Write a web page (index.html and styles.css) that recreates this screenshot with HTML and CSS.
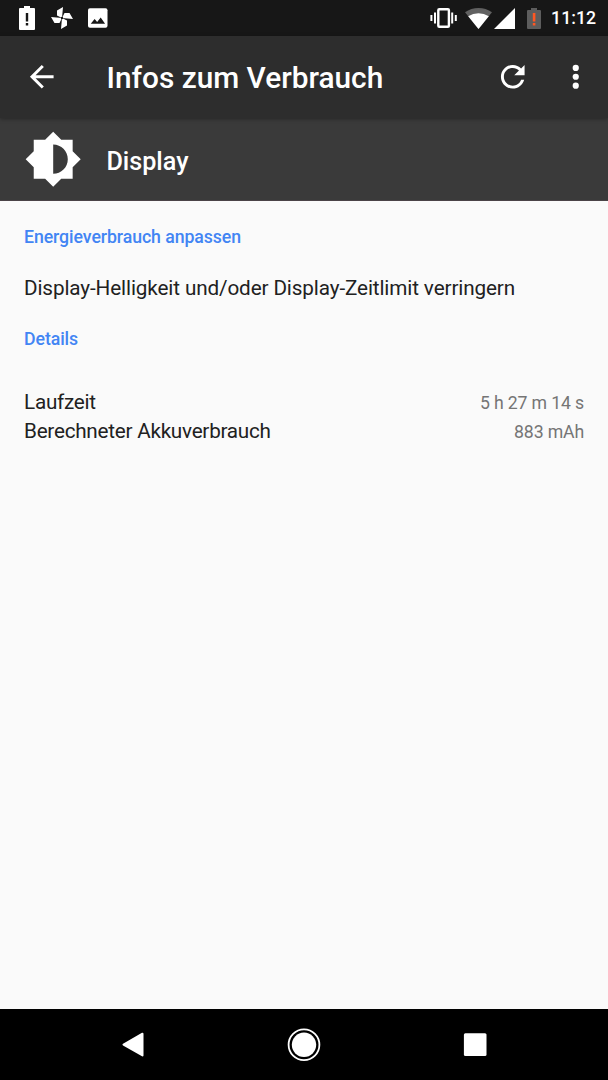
FILE: index.html
```
<!DOCTYPE html>
<html lang="de">
<head>
	<meta charset="UTF-8">
	<title>Infos zum Verbrauch</title>
	<link rel="stylesheet" href="styles.css">
</head>
<body>
	<div class="screen">
		<div class="status_bar">
			<div class="notifications">
				<svg width="16" height="24" viewBox="0 0 16 24">
					<path fill="#fff" d="M5 0h6v2h4q1 0 1 1v20q0 1-1 1H1q-1 0-1-1V3q0-1 1-1h4z"/>
					<path fill="#171717" d="M6.800 7h2.400v8.500H6.800zM6.800 17h2.400v2.400H6.800z"/>
				</svg>
				<svg class="pinwheel" width="22" height="22" viewBox="0 0 22 22">
					<path fill="#fff" d="M12 0L6 3.500V8.500L11 11zM22 12L18.500 6H13.500L11 11zM10 22l6-3.500V13.500L11 11zM0 10l3.500 6H8.500L11 11z"/>
					<circle cx="11" cy="11" r="1.200" fill="#171717"/>
				</svg>
				<svg class="picture" width="19.500" height="20" viewBox="0 0 20 20">
					<rect width="20" height="20" rx="2" fill="#fff"/>
					<path fill="#171717" d="M2.800 16l4-5 2.600 3.200L13 9.500l4.500 6.500z"/>
				</svg>
			</div>
			<div class="system">
				<svg width="27" height="20" viewBox="0 0 27 20">
					<path fill="none" stroke="#fff" stroke-width="2" d="M1.400 7v6M5 4.500v11M22.200 4.500v11M25.800 7v6"/>
					<rect x="8.300" y="1.200" width="10.600" height="17.600" rx="1" fill="none" stroke="#fff" stroke-width="2.400"/>
				</svg>
				<svg class="wifi" width="27" height="21" viewBox="0 0 27 21">
					<path fill="#616161" d="M13.500 21L0 4.300Q6 0 13.500 0T27 4.300z"/>
					<path fill="#fff" d="M13.500 21L3.200 8.200Q8 5.200 13.500 5.200t10.300 3z"/>
				</svg>
				<svg class="signal" width="21" height="21" viewBox="0 0 21 21">
					<path fill="#fff" d="M21 0v21H0z"/>
				</svg>
				<svg class="battery" width="14" height="21" viewBox="0 0 14 21">
					<path fill="#5d5d5d" d="M4 0h6v2h3q1 0 1 1v17q0 1-1 1H1q-1 0-1-1V3q0-1 1-1h3z"/>
					<path fill="#ff5722" d="M5.800 5h2.600v8.500H5.800zM5.800 15h2.600v2.500H5.800z"/>
				</svg>
				<span class="clock">11:12</span>
			</div>
		</div>

		<div class="toolbar">
			<svg class="back" viewBox="0 0 24 24">
				<path fill="#fff" d="M20 11H7.830l5.590-5.590L12 4l-8 8 8 8 1.410-1.410L7.830 13H20v-2z"/>
			</svg>
			<h1>Infos zum Verbrauch</h1>
			<svg class="refresh" viewBox="0 0 24 24">
				<path fill="#fff" d="M17.650 6.350C16.200 4.900 14.210 4 12 4c-4.420 0-7.990 3.580-7.990 8s3.570 8 7.990 8c3.730 0 6.840-2.550 7.730-6h-2.080c-.82 2.330-3.040 4-5.650 4-3.310 0-6-2.690-6-6s2.690-6 6-6c1.660 0 3.140.69 4.220 1.780L13 11h7V4l-2.350 2.350z"/>
			</svg>
			<svg class="more" viewBox="0 0 24 24">
				<circle cx="12" cy="6" r="2.100" fill="#fff"/>
				<circle cx="12" cy="12" r="2.100" fill="#fff"/>
				<circle cx="12" cy="18" r="2.100" fill="#fff"/>
			</svg>
		</div>

		<div class="app_header">
			<svg class="brightness" viewBox="0 0 24 24">
				<path fill="#fff" d="M20 15.310L23.310 12 20 8.690V4h-4.690L12 .69 8.690 4H4v4.690L.69 12 4 15.310V20h4.690L12 23.310 15.310 20H20v-4.690zM12 18V6c3.310 0 6 2.690 6 6s-2.690 6-6 6z"/>
			</svg>
			<h2>Display</h2>
		</div>

		<div class="content">
			<h3>Energieverbrauch anpassen</h3>
			<p class="hint">Display-Helligkeit und/oder Display-Zeitlimit verringern</p>
			<h3>Details</h3>
			<ul class="details">
				<li><span>Laufzeit</span><span class="value">5 h 27 m 14 s</span></li>
				<li><span>Berechneter Akkuverbrauch</span><span class="value">883 mAh</span></li>
			</ul>
		</div>

		<div class="nav_bar">
			<svg width="34" height="34" viewBox="0 0 34 34">
				<path fill="#fff" stroke="#fff" stroke-width="2" stroke-linejoin="round" d="M26.500 5.700v21.800L7.500 16.600z"/>
			</svg>
			<svg width="34" height="34" viewBox="0 0 34 34">
				<circle cx="17" cy="16.800" r="15.400" fill="none" stroke="#fff" stroke-width="1.800"/>
				<circle cx="17" cy="16.800" r="12.200" fill="#fff"/>
			</svg>
			<svg width="34" height="34" viewBox="0 0 34 34">
				<rect x="5.900" y="5.300" width="22.600" height="22.600" rx="1.500" fill="#fff"/>
			</svg>
		</div>
	</div>
</body>
</html>
```
FILE: styles.css
```
*{
	margin:0;
	padding:0;
	box-sizing:border-box;
}

body{
	font-family:Roboto, "Liberation Sans", sans-serif;
	background-color:#fafafa;
}

svg{
	display:block;
	flex:none;
}

h1,h2,h3{
	font-weight:500;
}

.screen{
	width:608px;
	height:1080px;
	display:flex;
	flex-direction:column;
}

.status_bar{
	height:36px;
	padding:0 12px 0 19px;
	background-color:#171717;
	display:flex;
	align-items:center;
	justify-content:space-between;
}

.notifications,.system{
	display:flex;
	align-items:center;
}

.pinwheel{
	margin-left:16px;
}

.picture{
	margin-left:15px;
}

.wifi{
	margin-left:8px;
}

.signal{
	margin-left:2px;
}

.battery{
	margin-left:12px;
}

.clock{
	margin-left:10px;
	font-size:17.7px;
	font-weight:500;
	line-height:36px;
	color:#fff;
}

.toolbar{
	height:82px;
	padding:0 15px 0 23.5px;
	background-color:#2d2d2d;
	box-shadow:0 1px 4px rgba(0,0,0,0.35);
	display:flex;
	align-items:center;
	z-index:1;
}

.back,.refresh,.more{
	width:35.5px;
	height:35.5px;
}

.toolbar h1{
	flex:1;
	margin-left:47.5px;
	font-size:29.8px;
	line-height:36px;
	padding-top:2px;
	color:#fff;
}

.more{
	margin-left:27px;
}

.app_header{
	height:83px;
	padding:1px 0 0 24px;
	background-color:#3a3a3a;
	border-bottom:1px solid #4a4347;
	display:flex;
	align-items:center;
}

.brightness{
	width:58.4px;
	height:58.4px;
}

.app_header h2{
	margin-left:24px;
	font-size:25.2px;
	line-height:32px;
	padding-top:4px;
	color:#fff;
}

.content{
	flex:1;
	padding:24px 24px 0;
	background-color:#fafafa;
}

.content h3{
	font-size:17.7px;
	letter-spacing:-0.07px;
	line-height:24px;
	color:#4285f4;
}

.hint{
	margin:25px 0;
	font-size:20.7px;
	letter-spacing:-0.12px;
	line-height:28px;
	color:#212121;
	white-space:nowrap;
}

.details{
	margin-top:37px;
	list-style:none;
}

.details li{
	height:29px;
	display:flex;
	justify-content:space-between;
	align-items:baseline;
	font-size:20.7px;
	letter-spacing:-0.25px;
	line-height:29px;
	color:#212121;
}

.details .value{
	font-size:17.7px;
	letter-spacing:-0.15px;
	line-height:20px;
	color:#757575;
}

.nav_bar{
	height:71px;
	padding:0 116px;
	background-color:#000;
	display:flex;
	align-items:center;
	justify-content:space-between;
}
```
